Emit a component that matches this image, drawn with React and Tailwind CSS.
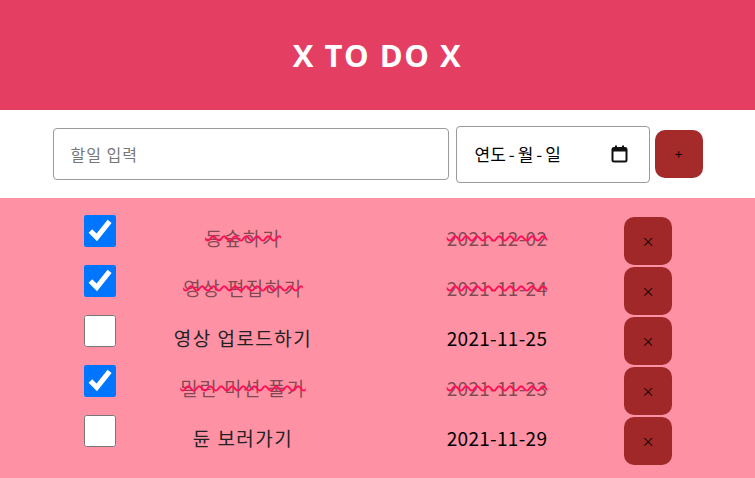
import React, { useState } from "react";

const initialTodos = [
  { id: 1, text: "동숲하기", date: "2021-12-02", done: true },
  { id: 2, text: "영상 편집하기", date: "2021-11-24", done: true },
  { id: 3, text: "영상 업로드하기", date: "2021-11-25", done: false },
  { id: 4, text: "밀린 미션 풀기", date: "2021-11-23", done: true },
  { id: 5, text: "듄 보러가기", date: "2021-11-29", done: false },
];

const CalendarIcon = () => (
  <svg width="17" height="18" viewBox="0 0 17 18" fill="none">
    <rect x="1.5" y="3" width="14" height="13.5" rx="1.5" stroke="#111" strokeWidth="2" />
    <rect x="1.5" y="3" width="14" height="3.5" fill="#111" />
    <rect x="4" y="0.5" width="2" height="3.5" fill="#111" />
    <rect x="11" y="0.5" width="2" height="3.5" fill="#111" />
  </svg>
);

const App = () => {
  const [todos, setTodos] = useState(initialTodos);
  const [text, setText] = useState("");

  const toggleTodo = (id) =>
    setTodos((current) =>
      current.map((t) => (t.id === id ? { ...t, done: !t.done } : t))
    );
  const removeTodo = (id) =>
    setTodos((current) => current.filter((t) => t.id !== id));

  return (
    <div className="w-[755px] min-h-[478px] bg-[#ff91a5] font-['Noto_Sans_CJK_KR',sans-serif]">
      {/* 헤더 */}
      <header className="h-[110px] bg-[#e53e63] flex items-center justify-center">
        <h1 className="text-white text-[31px] font-bold tracking-[1.5px] font-['Open_Sans',sans-serif]">
          X TO DO X
        </h1>
      </header>

      {/* 입력 영역 */}
      <div className="h-[88px] bg-white flex items-center justify-center">
        <input
          type="text"
          value={text}
          onChange={(e) => setText(e.target.value)}
          placeholder="할일 입력"
          className="w-[396px] h-[52px] border border-[#9a9a9a] rounded-[4px] pl-[17px] text-[16px] tracking-[1px] placeholder:text-[#777] outline-none"
        />
        <div className="ml-[7px] w-[194px] h-[57px] border border-[#9a9a9a] rounded-[4px] flex items-center justify-between pl-[18px] pr-[21px] text-[17px] text-black">
          <span className="flex items-center">
            연도<span className="mx-[3px]">-</span>월<span className="mx-[3px]">-</span>일
          </span>
          <CalendarIcon />
        </div>
        <button className="ml-[5px] w-[48px] h-[48px] rounded-[10px] bg-[#a52a2a] text-[13px] text-black">
          +
        </button>
      </div>

      {/* 할일 목록 */}
      <ul className="pt-[17px]">
        {todos.map((todo) => (
          <li key={todo.id} className="h-[50px] flex items-start pl-[84px]">
            <input
              type="checkbox"
              checked={todo.done}
              onChange={() => toggleTodo(todo.id)}
              className="w-8 h-8 m-0"
            />
            <div
              className={`w-[254px] text-center leading-[46px] text-[19px] tracking-[1.5px] ${
                todo.done
                  ? "text-black/50 line-through decoration-wavy decoration-2 decoration-[#ff0f55]"
                  : "text-[#222]"
              }`}
            >
              {todo.text}
            </div>
            <div
              className={`w-[254px] text-center leading-[46px] text-[19px] tracking-[0.3px] ${
                todo.done
                  ? "text-black/50 line-through decoration-wavy decoration-2 decoration-[#ff0f55]"
                  : "text-black"
              }`}
            >
              {todo.date}
            </div>
            <button
              onClick={() => removeTodo(todo.id)}
              className="mt-[2px] w-[48px] h-[48px] rounded-[10px] bg-[#a02828] text-[13px] text-black"
            >
              ×
            </button>
          </li>
        ))}
      </ul>
    </div>
  );
};

export default App;
